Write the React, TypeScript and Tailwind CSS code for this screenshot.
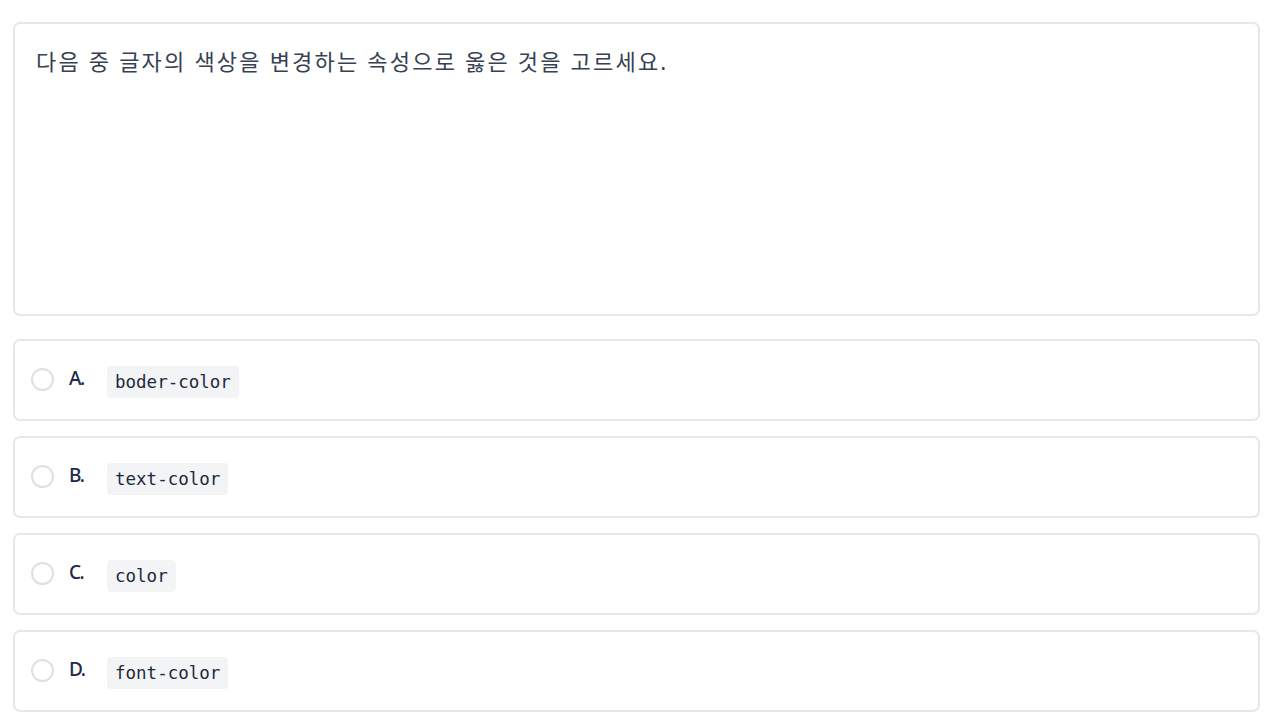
import React from 'react';

const options = [
    { key: 'A', code: 'boder-color' },
    { key: 'B', code: 'text-color' },
    { key: 'C', code: 'color' },
    { key: 'D', code: 'font-color' },
];

const App: React.FC = () => {
    return (
        <div className="min-h-screen bg-white pl-[13px] pr-[20px] pt-[22px] font-['Noto_Sans','Noto_Sans_CJK_KR',sans-serif]">
            {/* Question */}
            <div className="h-[294px] rounded-[7px] border-2 border-[#e5e7eb] px-[21px] pt-[17px]">
                <p className="text-[22px] leading-[40px] tracking-[2.2px] text-[#374151]">
                    다음 중 글자의 색상을 변경하는 속성으로 옳은 것을 고르세요.
                </p>
            </div>

            {/* Options */}
            <div className="mt-[23px] flex flex-col gap-[15px]">
                {options.map((o) => (
                    <div
                        key={o.key}
                        className="flex h-[82px] items-center rounded-[7px] border-2 border-[#e5e7eb] pl-[16px]"
                    >
                        <span className="-mt-[2px] h-[23px] w-[23px] rounded-full border-2 border-[#e0e0e0] bg-white" />
                        <span className="-mt-[3px] ml-[15px] w-[38px] text-[19px] font-medium tracking-[-1.5px] text-[#1e2a4a]">{o.key}.</span>
                        <code className="mt-[3px] rounded-[4px] bg-[#f3f4f6] px-[8px] py-[4px] font-['DejaVu_Sans_Mono',monospace] text-[17.5px] leading-[24px] text-[#1e293b]">
                            {o.code}
                        </code>
                    </div>
                ))}
            </div>
        </div>
    );
};

export default App;
